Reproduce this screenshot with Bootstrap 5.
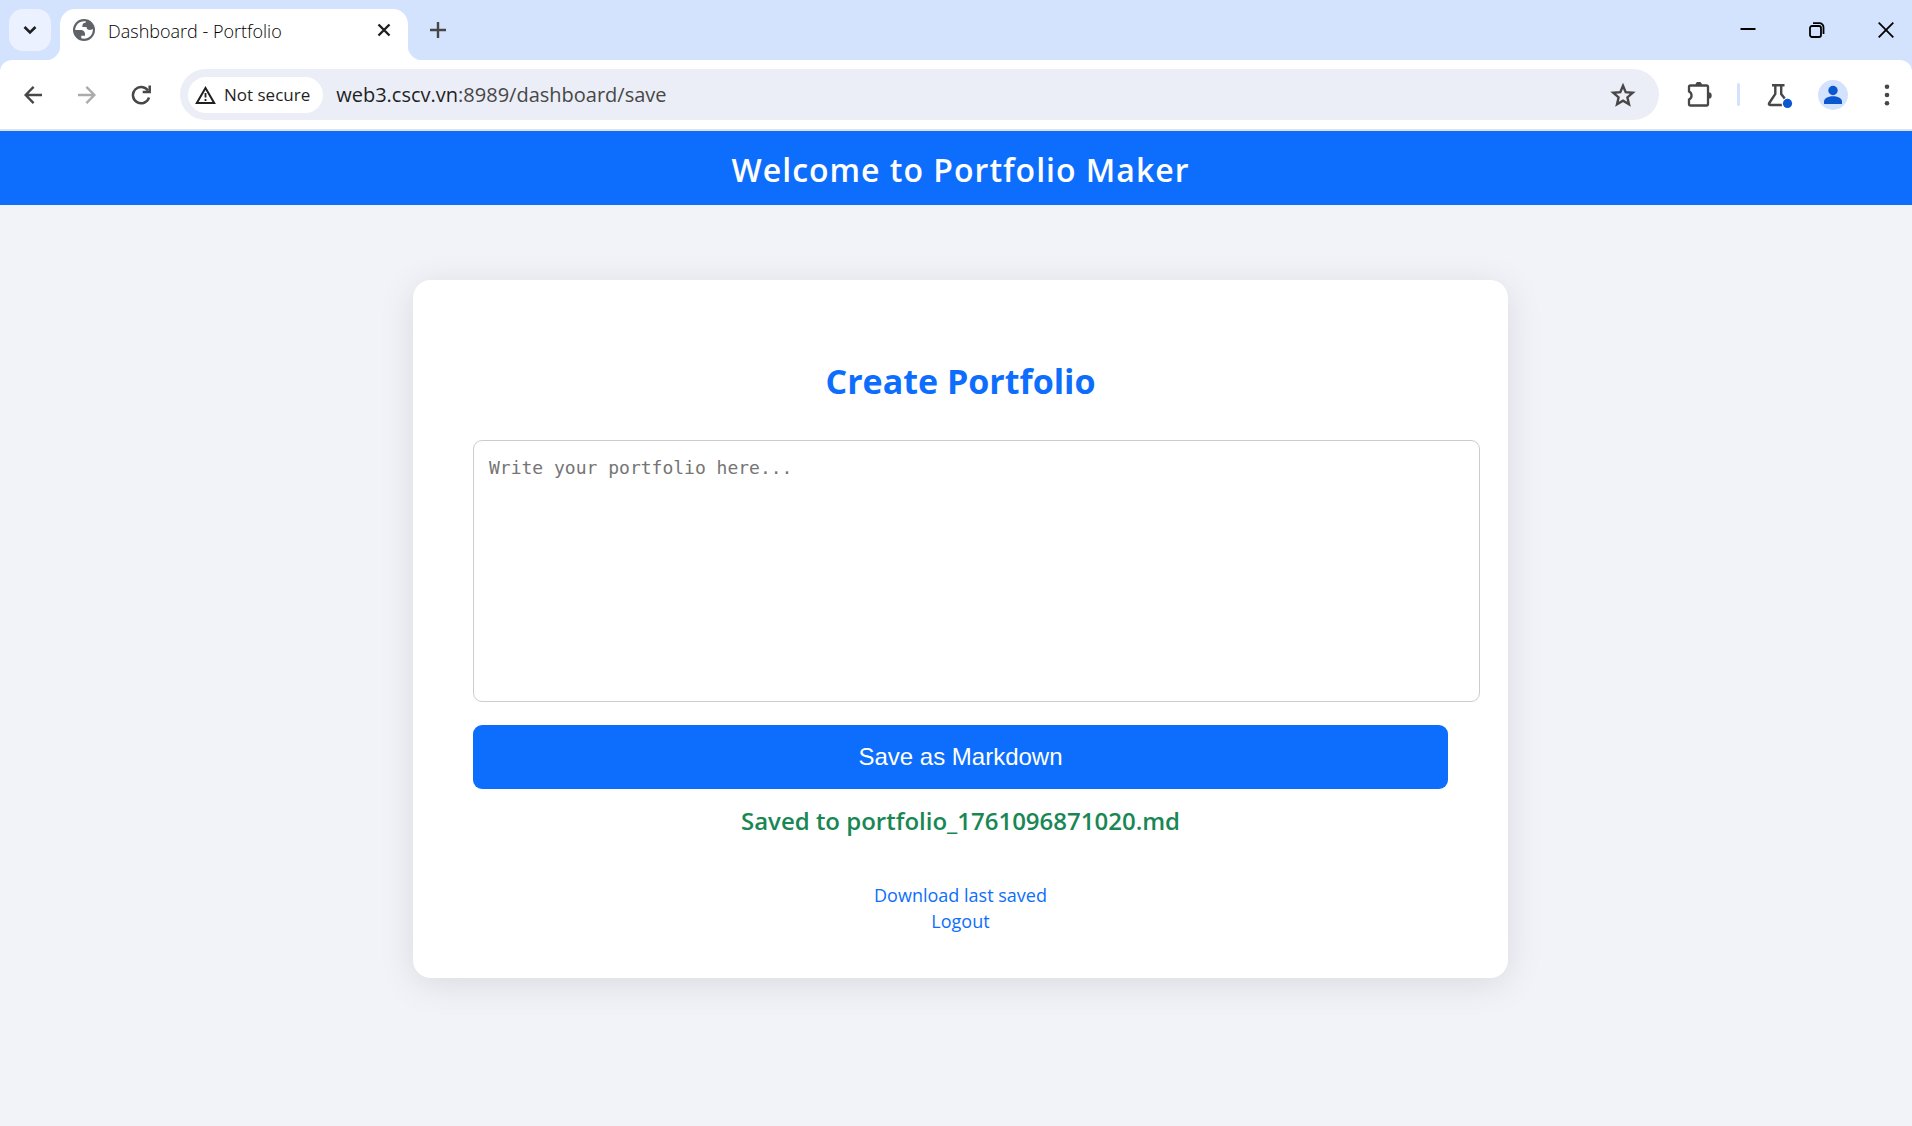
<!DOCTYPE html>
<html lang="en">
<head>
<meta charset="utf-8">
<meta name="viewport" content="width=device-width, initial-scale=1">
<title>Dashboard - Portfolio</title>
<link rel="stylesheet" href="https://cdn.jsdelivr.net/npm/bootstrap@5.3.0/dist/css/bootstrap.min.css">
<style>
  body { background: #f2f3f8; font-family: "Open Sans", "Noto Sans", sans-serif; color: #1f1f1f; }
  svg { display: block; flex: none; }
  .ico-btn { border: 0; background: none; padding: 0; display: flex; align-items: center; justify-content: center; flex: none; color: #474747; }

  /* tab strip */
  .tabstrip { background: #d3e2fd; height: 60px; padding: 9px 0 0 9px; }
  .tab-search { width: 42px; height: 42px; border-radius: 14px; background: #ebf1fe; color: #1f1f1f; }
  .tab-open { position: relative; width: 348px; height: 51px; margin-left: 9px; padding: 0 17px 9px 13px; background: #fff; border-radius: 15px 15px 0 0; font-size: 18px; line-height: 24px; font-weight: 300; }
  .tab-open::before, .tab-open::after { content: ""; position: absolute; bottom: 0; width: 15px; height: 15px; }
  .tab-open::before { right: 100%; background: radial-gradient(circle at 0 0, transparent 15px, #fff 16px); }
  .tab-open::after { left: 100%; background: radial-gradient(circle at 100% 0, transparent 15px, #fff 16px); }
  .tab-title { color: #000; padding: 2px 0 0 13px; }
  .new-tab { width: 42px; height: 42px; margin-left: 9px; }
  .win-group { gap: 17px; }
  .win-btn { width: 52px; height: 42px; color: #000; }

  /* toolbar */
  .toolbar-wrap { background: #d3e2fd; }
  .toolbar { background: #fff; border-radius: 12px 12px 0 0; height: 71px; padding: 9px 0 9px 6px; border-bottom: 2px solid #dfe1e3; }
  .nav-btn { width: 54px; height: 51px; }
  .omnibox { height: 51px; border-radius: 26px; background: #ebeef7; padding: 0 23px 0 8px; margin: 0 28px 0 12px; }
  .site-chip { height: 36px; border-radius: 18px; background: #fff; border: 0; padding: 0 13px 0 7px; font-size: 17px; line-height: 24px; font-weight: 500; color: #1f1f1f; }
  .address { padding-left: 13px; outline: 0; font-size: 20px; line-height: 28px; color: #474747; min-width: 0; }
  .address-host { color: #1f1f1f; }
  .tool-sep { width: 3px; height: 23px; background: #d3e2fd; border-radius: 2px; margin: 0 27px 0 24px; }
  .profile-btn { margin: 0 14px 0 25px; }
  .more-btn { width: 50px; height: 51px; }

  /* page */
  .site-head { background: #0d6efd; padding: 18px 0 14px 9px; }
  .site-head h1 { font-size: 32px; line-height: 42px; font-weight: 600; letter-spacing: 1px; color: #fff; }
  .page-main { padding: 75px 0 75px 9px; }
  .maker { width: 100%; max-width: 1095px; background: #fff; border-radius: 18px; padding: 77px 60px 44px; box-shadow: 0 6px 36px rgba(0, 0, 0, .1); }
  .maker h2 { font-size: 34px; line-height: 48px; font-weight: 700; color: #0d6efd; margin-bottom: 35px; }
  .draft { display: block; width: calc(100% + 32px); height: 262px; border: 1px solid #ccc; border-radius: 9px; padding: 15px; resize: none; font: 18px/24px "DejaVu Sans Mono", "Liberation Mono", monospace; }
  .draft::placeholder { color: #757575; }
  .save-btn { margin-top: 23px; height: 64px; border: 0; border-radius: 9px; background: #0d6efd; font: 24px/28px "Liberation Sans", sans-serif; color: #fff; }
  .status-line { margin: 16px 0 45px; font-size: 24px; line-height: 32px; font-weight: 600; color: #198754; }
  .page-link-plain { font-size: 18px; line-height: 26px; color: #0d6efd; text-decoration: none; }
</style>
</head>
<body>
<header>
  <div class="tabstrip d-flex align-items-start">
    <button class="ico-btn tab-search" aria-label="Search tabs">
      <svg width="14" height="10" viewBox="0 0 14 10" fill="none" stroke="currentColor" stroke-width="2.6"><path d="M1.5 2 7 7.400 12.500 2"/></svg>
    </button>
    <div class="tab-open d-flex align-items-center">
      <svg width="22" height="22" viewBox="2 2 20 20"><circle cx="12" cy="12" r="10" fill="#5f6368"/><path fill="#fff" d="M4 12h4.400c3.400.02 4.900 1.730 4.500 5.130H9.500v2.470C10.300 19.870 11.100 20 12 20c4.400 0 8-3.600 8-8 0-.35-.02-.7-.07-1.050C19.500 11.650 18.700 12 17.500 12c-2.140 0-3.210-.92-3.210-2.750h-3.750C10.270 6.690 11.220 5.400 13.400 5.400c0-.6.190-1.030.480-1.180C13.270 4.080 12.640 4 12 4c-4.400 0-8 3.600-8 8z"/></svg>
      <span class="tab-title flex-grow-1">Dashboard - Portfolio</span>
      <button class="ico-btn" aria-label="Close tab">
        <svg width="14" height="14" viewBox="0 0 14 14" stroke="#1f1f1f" stroke-width="2.400"><path d="m1.500 1.500 11 11m0-11-11 11"/></svg>
      </button>
    </div>
    <button class="ico-btn new-tab" aria-label="New tab">
      <svg width="16" height="16" viewBox="0 0 16 16" stroke="#474747" stroke-width="2.400"><path d="M8 0v16M0 8h16"/></svg>
    </button>
    <div class="win-group d-flex ms-auto">
      <button class="ico-btn win-btn" aria-label="Minimize"><svg width="16" height="16" viewBox="0 0 16 16" stroke="currentColor" stroke-width="2"><path d="M.5 7h15"/></svg></button>
      <button class="ico-btn win-btn" aria-label="Restore"><svg width="16" height="16" viewBox="0 0 16 16" fill="none" stroke="currentColor" stroke-width="1.800"><rect x="1" y="4" width="11" height="11" rx="2"/><path d="M4 1.200h6.500a4 4 0 0 1 4 4V12"/></svg></button>
      <button class="ico-btn win-btn" aria-label="Close window"><svg width="16" height="16" viewBox="0 0 16 16" stroke="currentColor" stroke-width="1.800"><path d="m.7.7 14.600 14.600M15.300.7.7 15.300"/></svg></button>
    </div>
  </div>
  <div class="toolbar-wrap">
    <div class="toolbar d-flex align-items-center">
      <button class="ico-btn nav-btn" aria-label="Back"><svg width="18" height="18" viewBox="0 0 18 18" fill="none" stroke="currentColor" stroke-width="2.400"><path d="M18 9H1.800M9.600.9 1.600 9l8 8.100"/></svg></button>
      <button class="ico-btn nav-btn" aria-label="Forward"><svg width="18" height="18" viewBox="0 0 18 18" fill="none" stroke="#ababab" stroke-width="2.400"><path d="M0 9h16.200M8.400.9l8 8.100-8 8.100"/></svg></button>
      <button class="ico-btn nav-btn" aria-label="Reload"><svg width="20" height="20" viewBox="0 0 20 20" fill="none" stroke="currentColor" stroke-width="2.500"><path d="M18 12.500A8.200 8.200 0 1 1 17 5.600"/><path d="M18.700.5v6.600h-7"/></svg></button>
      <div class="omnibox d-flex align-items-center flex-grow-1">
        <button class="site-chip d-flex align-items-center">
          <svg width="21" height="18" viewBox="0 0 21 18" fill="none" stroke="#1f1f1f" stroke-width="2"><path d="M10.500 2 1.800 17h17.400z"/><path d="M10.500 7v4.500m0 1.500v2" stroke-width="1.800"/></svg>
          <span class="ms-2">Not secure</span>
        </button>
        <div class="address flex-grow-1" role="textbox" aria-label="Address" contenteditable="true" spellcheck="false"><span class="address-host">web3.cscv.vn</span>:8989/dashboard/save</div>
        <button class="ico-btn" aria-label="Bookmark"><svg width="26" height="24" viewBox="0 0 26 24" fill="none" stroke="currentColor" stroke-width="2.400"><path d="m13 2.800 2.700 6.400 7 .6-5.300 4.600 1.600 6.800-6-3.600-6 3.600 1.600-6.800-5.300-4.600 7-.6z"/></svg></button>
      </div>
      <button class="ico-btn" aria-label="Extensions"><svg width="26" height="26" viewBox="0 1 26 26"><path d="M3.500 4.500h16a1.500 1.500 0 0 1 1.500 1.500v17a1.500 1.500 0 0 1-1.500 1.500h-16A1.500 1.500 0 0 1 2 23v-4.500a4.400 4.400 0 0 0 0-8V6a1.500 1.500 0 0 1 1.500-1.500z" fill="none" stroke="#474747" stroke-width="2.300"/><path d="M8.500 4a3.200 3.200 0 0 1 6.400 0zM21.500 11.300a3.200 3.200 0 0 1 0 6.400z" fill="#474747"/></svg></button>
      <div class="tool-sep"></div>
      <button class="ico-btn" aria-label="Labs"><svg width="26" height="26" viewBox="0 0 26 26"><path d="M5 3.200h12.500M8.300 3.500V12L2.300 21c-.8 1.300-.2 2 .8 2H15M14.200 3.500V12l3.500 4.600" fill="none" stroke="#474747" stroke-width="2.400"/><circle cx="20.500" cy="22" r="5.800" fill="#fff"/><circle cx="20.500" cy="21.400" r="4.600" fill="#0b57d0"/></svg></button>
      <button class="ico-btn profile-btn" aria-label="Profile"><svg width="30" height="30" viewBox="0 0 30 30"><circle cx="15" cy="15" r="15" fill="#d3e3fd"/><circle cx="15" cy="10.500" r="4.700" fill="#0b57d0"/><path d="M6 24v-2.500c0-3.400 5-5.200 9-5.200s9 1.800 9 5.200V24z" fill="#0b57d0"/></svg></button>
      <button class="ico-btn more-btn" aria-label="Menu"><svg width="6" height="22" viewBox="0 0 6 22" fill="#474747"><circle cx="3" cy="2.700" r="2.300"/><circle cx="3" cy="11" r="2.300"/><circle cx="3" cy="19.300" r="2.300"/></svg></button>
    </div>
  </div>
</header>

<div class="site-head text-center"><h1 class="m-0">Welcome to Portfolio Maker</h1></div>

<main class="page-main d-flex justify-content-center">
  <section class="maker text-center">
    <h2>Create Portfolio</h2>
    <form>
      <textarea class="draft" aria-label="Portfolio text" placeholder="Write your portfolio here..."></textarea>
      <button type="button" class="save-btn w-100 d-block">Save as Markdown</button>
    </form>
    <p class="status-line">Saved to portfolio_1761096871020.md</p>
    <div class="d-flex flex-column align-items-center">
      <a class="page-link-plain" href="#">Download last saved</a>
      <a class="page-link-plain" href="#">Logout</a>
    </div>
  </section>
</main>
<script src="https://cdn.jsdelivr.net/npm/bootstrap@5.3.0/dist/js/bootstrap.bundle.min.js"></script>
</body>
</html>
